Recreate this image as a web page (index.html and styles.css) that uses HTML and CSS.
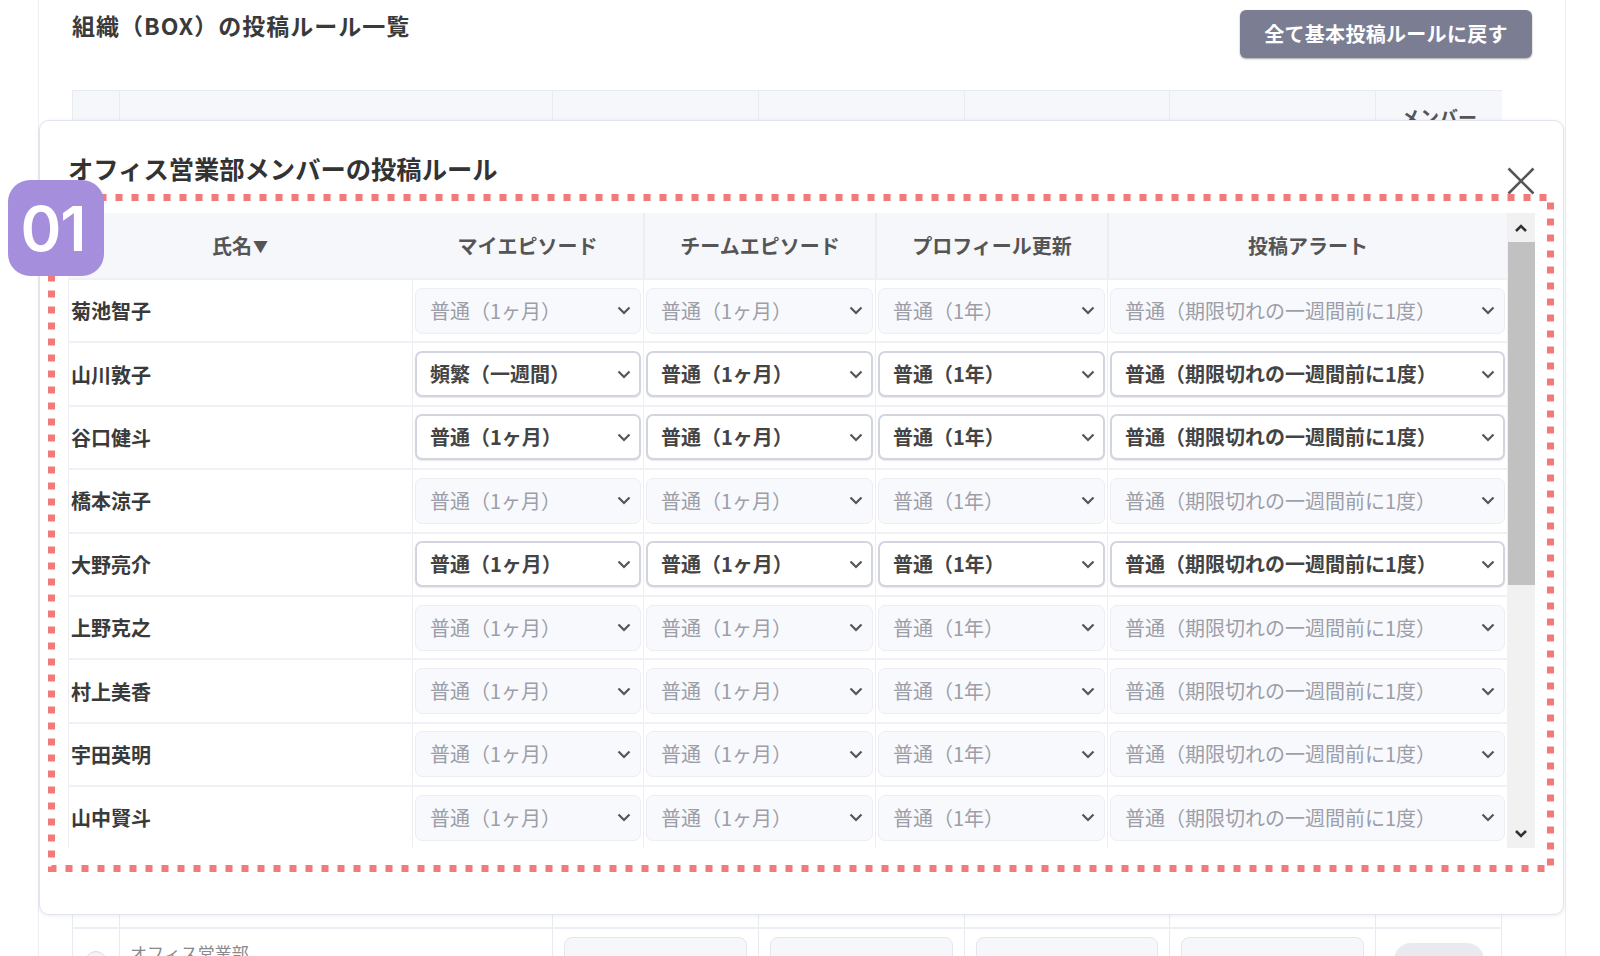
FILE: index.html
```html
<!DOCTYPE html>
<html lang="ja">
<head>
<meta charset="utf-8">
<title>投稿ルール</title>
<link rel="stylesheet" href="styles.css">
</head>
<body>
<div class="page">
  <div class="bg-card">
    <div class="bg-head">
      <h1 class="bg-title">組織（BOX）の投稿ルール一覧</h1>
      <button class="reset-btn">全て基本投稿ルールに戻す</button>
    </div>
    <div class="bg-table">
      <div class="bg-row bg-hrow">
        <div class="bc"></div><div class="bc"></div><div class="bc"></div><div class="bc"></div><div class="bc"></div><div class="bc"></div>
        <div class="bc bh">メンバー<br>数</div>
      </div>
      <div class="bg-row"><div class="bc"><span class="chk"></span></div><div class="bc bn">本社</div><div class="bc"><span class="bbox"></span></div><div class="bc"><span class="bbox"></span></div><div class="bc"><span class="bbox"></span></div><div class="bc"><span class="bbox"></span></div><div class="bc bl"><span class="pill"></span></div></div>
      <div class="bg-row"><div class="bc"><span class="chk"></span></div><div class="bc bn">管理部</div><div class="bc"><span class="bbox"></span></div><div class="bc"><span class="bbox"></span></div><div class="bc"><span class="bbox"></span></div><div class="bc"><span class="bbox"></span></div><div class="bc bl"><span class="pill"></span></div></div>
      <div class="bg-row"><div class="bc"><span class="chk"></span></div><div class="bc bn">人事部</div><div class="bc"><span class="bbox"></span></div><div class="bc"><span class="bbox"></span></div><div class="bc"><span class="bbox"></span></div><div class="bc"><span class="bbox"></span></div><div class="bc bl"><span class="pill"></span></div></div>
      <div class="bg-row"><div class="bc"><span class="chk"></span></div><div class="bc bn">経理部</div><div class="bc"><span class="bbox"></span></div><div class="bc"><span class="bbox"></span></div><div class="bc"><span class="bbox"></span></div><div class="bc"><span class="bbox"></span></div><div class="bc bl"><span class="pill"></span></div></div>
      <div class="bg-row"><div class="bc"><span class="chk"></span></div><div class="bc bn">総務部</div><div class="bc"><span class="bbox"></span></div><div class="bc"><span class="bbox"></span></div><div class="bc"><span class="bbox"></span></div><div class="bc"><span class="bbox"></span></div><div class="bc bl"><span class="pill"></span></div></div>
      <div class="bg-row"><div class="bc"><span class="chk"></span></div><div class="bc bn">開発部</div><div class="bc"><span class="bbox"></span></div><div class="bc"><span class="bbox"></span></div><div class="bc"><span class="bbox"></span></div><div class="bc"><span class="bbox"></span></div><div class="bc bl"><span class="pill"></span></div></div>
      <div class="bg-row"><div class="bc"><span class="chk"></span></div><div class="bc bn">企画部</div><div class="bc"><span class="bbox"></span></div><div class="bc"><span class="bbox"></span></div><div class="bc"><span class="bbox"></span></div><div class="bc"><span class="bbox"></span></div><div class="bc bl"><span class="pill"></span></div></div>
      <div class="bg-row"><div class="bc"><span class="chk"></span></div><div class="bc bn">広報部</div><div class="bc"><span class="bbox"></span></div><div class="bc"><span class="bbox"></span></div><div class="bc"><span class="bbox"></span></div><div class="bc"><span class="bbox"></span></div><div class="bc bl"><span class="pill"></span></div></div>
      <div class="bg-row"><div class="bc"><span class="chk"></span></div><div class="bc bn">営業部</div><div class="bc"><span class="bbox"></span></div><div class="bc"><span class="bbox"></span></div><div class="bc"><span class="bbox"></span></div><div class="bc"><span class="bbox"></span></div><div class="bc bl"><span class="pill"></span></div></div>
      <div class="bg-row"><div class="bc"><span class="chk"></span></div><div class="bc bn">法人営業部</div><div class="bc"><span class="bbox"></span></div><div class="bc"><span class="bbox"></span></div><div class="bc"><span class="bbox"></span></div><div class="bc"><span class="bbox"></span></div><div class="bc bl"><span class="pill"></span></div></div>
      <div class="bg-row"><div class="bc"><span class="chk"></span></div><div class="bc bn">店舗営業部</div><div class="bc"><span class="bbox"></span></div><div class="bc"><span class="bbox"></span></div><div class="bc"><span class="bbox"></span></div><div class="bc"><span class="bbox"></span></div><div class="bc bl"><span class="pill"></span></div></div>
      <div class="bg-row"><div class="bc"><span class="chk"></span></div><div class="bc bn">海外営業部</div><div class="bc"><span class="bbox"></span></div><div class="bc"><span class="bbox"></span></div><div class="bc"><span class="bbox"></span></div><div class="bc"><span class="bbox"></span></div><div class="bc bl"><span class="pill"></span></div></div>
      <div class="bg-row"><div class="bc"><span class="chk"></span></div><div class="bc bn">オフィス営業部</div><div class="bc"><span class="bbox"></span></div><div class="bc"><span class="bbox"></span></div><div class="bc"><span class="bbox"></span></div><div class="bc"><span class="bbox"></span></div><div class="bc bl"><span class="pill"></span></div></div>
    </div>
  </div>

  <div class="modal">
    <div class="m-head">
      <h2 class="m-title">オフィス営業部メンバーの投稿ルール</h2>
      <svg class="m-close" width="28" height="28" viewBox="0 0 28 28"><path d="M1.5 1.5 L26.5 26.5 M26.5 1.5 L1.5 26.5" stroke="#555" stroke-width="2.6" fill="none"/></svg>
    </div>
    <div class="m-body">
      <div class="tbl">
        <div class="t-row t-head">
          <div class="th">氏名<span class="tri">▼</span></div>
          <div class="th">マイエピソード</div>
          <div class="th sep">チームエピソード</div>
          <div class="th sep">プロフィール更新</div>
          <div class="th sep">投稿アラート</div>
        </div>

        <div class="t-row">
          <div class="td nm">菊池智子</div>
          <div class="td"><div class="sel"><span>普通（1ヶ月）</span><svg width="14" height="9" viewBox="0 0 14 9"><path d="M1.5 1.5 L7 7 L12.5 1.5" /></svg></div></div>
          <div class="td"><div class="sel"><span>普通（1ヶ月）</span><svg width="14" height="9" viewBox="0 0 14 9"><path d="M1.5 1.5 L7 7 L12.5 1.5" /></svg></div></div>
          <div class="td"><div class="sel"><span>普通（1年）</span><svg width="14" height="9" viewBox="0 0 14 9"><path d="M1.5 1.5 L7 7 L12.5 1.5" /></svg></div></div>
          <div class="td"><div class="sel"><span>普通（期限切れの一週間前に1度）</span><svg width="14" height="9" viewBox="0 0 14 9"><path d="M1.5 1.5 L7 7 L12.5 1.5" /></svg></div></div>
        </div>

        <div class="t-row">
          <div class="td nm">山川敦子</div>
          <div class="td"><div class="sel on"><span>頻繁（一週間）</span><svg width="14" height="9" viewBox="0 0 14 9"><path d="M1.5 1.5 L7 7 L12.5 1.5" /></svg></div></div>
          <div class="td"><div class="sel on"><span>普通（1ヶ月）</span><svg width="14" height="9" viewBox="0 0 14 9"><path d="M1.5 1.5 L7 7 L12.5 1.5" /></svg></div></div>
          <div class="td"><div class="sel on"><span>普通（1年）</span><svg width="14" height="9" viewBox="0 0 14 9"><path d="M1.5 1.5 L7 7 L12.5 1.5" /></svg></div></div>
          <div class="td"><div class="sel on"><span>普通（期限切れの一週間前に1度）</span><svg width="14" height="9" viewBox="0 0 14 9"><path d="M1.5 1.5 L7 7 L12.5 1.5" /></svg></div></div>
        </div>

        <div class="t-row">
          <div class="td nm">谷口健斗</div>
          <div class="td"><div class="sel on"><span>普通（1ヶ月）</span><svg width="14" height="9" viewBox="0 0 14 9"><path d="M1.5 1.5 L7 7 L12.5 1.5" /></svg></div></div>
          <div class="td"><div class="sel on"><span>普通（1ヶ月）</span><svg width="14" height="9" viewBox="0 0 14 9"><path d="M1.5 1.5 L7 7 L12.5 1.5" /></svg></div></div>
          <div class="td"><div class="sel on"><span>普通（1年）</span><svg width="14" height="9" viewBox="0 0 14 9"><path d="M1.5 1.5 L7 7 L12.5 1.5" /></svg></div></div>
          <div class="td"><div class="sel on"><span>普通（期限切れの一週間前に1度）</span><svg width="14" height="9" viewBox="0 0 14 9"><path d="M1.5 1.5 L7 7 L12.5 1.5" /></svg></div></div>
        </div>

        <div class="t-row">
          <div class="td nm">橋本涼子</div>
          <div class="td"><div class="sel"><span>普通（1ヶ月）</span><svg width="14" height="9" viewBox="0 0 14 9"><path d="M1.5 1.5 L7 7 L12.5 1.5" /></svg></div></div>
          <div class="td"><div class="sel"><span>普通（1ヶ月）</span><svg width="14" height="9" viewBox="0 0 14 9"><path d="M1.5 1.5 L7 7 L12.5 1.5" /></svg></div></div>
          <div class="td"><div class="sel"><span>普通（1年）</span><svg width="14" height="9" viewBox="0 0 14 9"><path d="M1.5 1.5 L7 7 L12.5 1.5" /></svg></div></div>
          <div class="td"><div class="sel"><span>普通（期限切れの一週間前に1度）</span><svg width="14" height="9" viewBox="0 0 14 9"><path d="M1.5 1.5 L7 7 L12.5 1.5" /></svg></div></div>
        </div>

        <div class="t-row">
          <div class="td nm">大野亮介</div>
          <div class="td"><div class="sel on"><span>普通（1ヶ月）</span><svg width="14" height="9" viewBox="0 0 14 9"><path d="M1.5 1.5 L7 7 L12.5 1.5" /></svg></div></div>
          <div class="td"><div class="sel on"><span>普通（1ヶ月）</span><svg width="14" height="9" viewBox="0 0 14 9"><path d="M1.5 1.5 L7 7 L12.5 1.5" /></svg></div></div>
          <div class="td"><div class="sel on"><span>普通（1年）</span><svg width="14" height="9" viewBox="0 0 14 9"><path d="M1.5 1.5 L7 7 L12.5 1.5" /></svg></div></div>
          <div class="td"><div class="sel on"><span>普通（期限切れの一週間前に1度）</span><svg width="14" height="9" viewBox="0 0 14 9"><path d="M1.5 1.5 L7 7 L12.5 1.5" /></svg></div></div>
        </div>

        <div class="t-row">
          <div class="td nm">上野克之</div>
          <div class="td"><div class="sel"><span>普通（1ヶ月）</span><svg width="14" height="9" viewBox="0 0 14 9"><path d="M1.5 1.5 L7 7 L12.5 1.5" /></svg></div></div>
          <div class="td"><div class="sel"><span>普通（1ヶ月）</span><svg width="14" height="9" viewBox="0 0 14 9"><path d="M1.5 1.5 L7 7 L12.5 1.5" /></svg></div></div>
          <div class="td"><div class="sel"><span>普通（1年）</span><svg width="14" height="9" viewBox="0 0 14 9"><path d="M1.5 1.5 L7 7 L12.5 1.5" /></svg></div></div>
          <div class="td"><div class="sel"><span>普通（期限切れの一週間前に1度）</span><svg width="14" height="9" viewBox="0 0 14 9"><path d="M1.5 1.5 L7 7 L12.5 1.5" /></svg></div></div>
        </div>

        <div class="t-row">
          <div class="td nm">村上美香</div>
          <div class="td"><div class="sel"><span>普通（1ヶ月）</span><svg width="14" height="9" viewBox="0 0 14 9"><path d="M1.5 1.5 L7 7 L12.5 1.5" /></svg></div></div>
          <div class="td"><div class="sel"><span>普通（1ヶ月）</span><svg width="14" height="9" viewBox="0 0 14 9"><path d="M1.5 1.5 L7 7 L12.5 1.5" /></svg></div></div>
          <div class="td"><div class="sel"><span>普通（1年）</span><svg width="14" height="9" viewBox="0 0 14 9"><path d="M1.5 1.5 L7 7 L12.5 1.5" /></svg></div></div>
          <div class="td"><div class="sel"><span>普通（期限切れの一週間前に1度）</span><svg width="14" height="9" viewBox="0 0 14 9"><path d="M1.5 1.5 L7 7 L12.5 1.5" /></svg></div></div>
        </div>

        <div class="t-row">
          <div class="td nm">宇田英明</div>
          <div class="td"><div class="sel"><span>普通（1ヶ月）</span><svg width="14" height="9" viewBox="0 0 14 9"><path d="M1.5 1.5 L7 7 L12.5 1.5" /></svg></div></div>
          <div class="td"><div class="sel"><span>普通（1ヶ月）</span><svg width="14" height="9" viewBox="0 0 14 9"><path d="M1.5 1.5 L7 7 L12.5 1.5" /></svg></div></div>
          <div class="td"><div class="sel"><span>普通（1年）</span><svg width="14" height="9" viewBox="0 0 14 9"><path d="M1.5 1.5 L7 7 L12.5 1.5" /></svg></div></div>
          <div class="td"><div class="sel"><span>普通（期限切れの一週間前に1度）</span><svg width="14" height="9" viewBox="0 0 14 9"><path d="M1.5 1.5 L7 7 L12.5 1.5" /></svg></div></div>
        </div>

        <div class="t-row">
          <div class="td nm">山中賢斗</div>
          <div class="td"><div class="sel"><span>普通（1ヶ月）</span><svg width="14" height="9" viewBox="0 0 14 9"><path d="M1.5 1.5 L7 7 L12.5 1.5" /></svg></div></div>
          <div class="td"><div class="sel"><span>普通（1ヶ月）</span><svg width="14" height="9" viewBox="0 0 14 9"><path d="M1.5 1.5 L7 7 L12.5 1.5" /></svg></div></div>
          <div class="td"><div class="sel"><span>普通（1年）</span><svg width="14" height="9" viewBox="0 0 14 9"><path d="M1.5 1.5 L7 7 L12.5 1.5" /></svg></div></div>
          <div class="td"><div class="sel"><span>普通（期限切れの一週間前に1度）</span><svg width="14" height="9" viewBox="0 0 14 9"><path d="M1.5 1.5 L7 7 L12.5 1.5" /></svg></div></div>
        </div>
      </div>
      <div class="sbar">
        <div class="sb-btn"><svg width="14" height="10" viewBox="0 0 14 10"><path d="M2 8 L7 3 L12 8"/></svg></div>
        <div class="sb-thumb"></div>
        <div class="sb-track"></div>
        <div class="sb-btn"><svg width="14" height="10" viewBox="0 0 14 10"><path d="M2 2 L7 7 L12 2"/></svg></div>
      </div>
    </div>
  </div>

  <div class="annot">
    <svg width="1506" height="678" viewBox="0 0 1506 678"><rect x="3.5" y="3.5" width="1499" height="671" fill="none" stroke="#f47a7a" stroke-width="7" stroke-dasharray="7 9"/></svg>
  </div>
  <div class="badge">01</div>
</div>
</body>
</html>
```

FILE: styles.css
```css
* { box-sizing: border-box; margin: 0; padding: 0; }
html, body { width: 1600px; height: 956px; overflow: hidden; background: #fff; }
body { font-family: "Noto Sans CJK JP", "Noto Sans", sans-serif; color: #333; }

.page { position: relative; width: 1600px; height: 956px; overflow: hidden; }

/* background page */
.bg-card {
  margin-left: 38px;
  width: 1528px;
  height: 956px;
  border-left: 1px solid #eceef4;
  border-right: 1px solid #eceef4;
  padding: 10px 33px 0 33px;
}
.bg-head { display: flex; justify-content: space-between; align-items: flex-start; height: 58px; margin-bottom: 22px; }
.bg-title { font-size: 23px; font-weight: 700; line-height: 30px; letter-spacing: 1px; color: #3a3a3a; }
.reset-btn {
  width: 292px; height: 48px;
  border: none; border-radius: 6px;
  background: #7b7e93; color: #fff;
  font-family: "Noto Sans CJK JP", sans-serif; font-weight: 700; font-size: 20px; line-height: 1;
  letter-spacing: 0.3px;
  box-shadow: 0 1px 2px rgba(0,0,0,.35);
}
.bg-table { width: 1430px; }
.bg-row {
  display: grid;
  grid-template-columns: 47px 433px 206px 206px 205px 206px 127px;
  height: 64px;
  border-top: 2px solid #eceef4;
}
.bg-hrow { height: 69px; background: #f6f7fb; border-top: 1px solid #e9ebf2; }
.bc { border-left: 1px solid #e9ebf2; padding-top: 8px; }
.bc.bl { border-right: 1px solid #e9ebf2; }
.bh { text-align: center; padding-top: 14px; font-size: 19px; line-height: 24px; font-weight: 700; color: #555; }
.bn { padding: 12px 0 0 10px; font-size: 17px; line-height: 24px; color: #8a8a8a; }
.chk { display: block; width: 22px; height: 22px; margin: 14px 0 0 12px; border: 1.5px solid #d8dbe4; border-radius: 50%; background: #f3f4f8; }
.bbox { display: block; height: 42px; margin: 0 11px; background: #f6f7fb; border: 1px solid #e3e6ee; border-radius: 8px; }
.pill { display: block; width: 90px; height: 34px; margin: 6px auto 0; background: #e8eaf0; border-radius: 17px; }

/* modal */
.modal {
  position: absolute; left: 39px; top: 120px;
  width: 1525px; height: 795px;
  background: #fff;
  border: 1px solid #e1e4ed;
  border-radius: 10px;
  box-shadow: 0 1px 4px rgba(30,40,80,.08);
  padding: 30px 28px 0 28px;
}
.m-head { display: flex; justify-content: space-between; align-items: flex-start; height: 62px; }
.m-title { font-size: 25.3px; line-height: 35px; font-weight: 700; color: #333; }
.m-close { display: block; margin-top: 16px; }

.m-body { display: flex; height: 635px; }
.tbl { width: 1439px; height: 635px; overflow: hidden; }
.t-row {
  display: grid;
  grid-template-columns: 344px 231px 232px 232px 400px;
  height: 63.4px;
  border-top: 2px solid #f0f1f6;
}
.t-head { height: 65px; background: #f6f7fb; border-top: none; }
.th { display: flex; align-items: center; justify-content: center; font-size: 20px; font-weight: 700; color: #555; }
.th .tri { font-size: 15px; margin-left: 1px; }
.th.sep { border-left: 2px solid #eceef4; }
.td { display: flex; align-items: center; border-left: 1px solid #eceef3; padding: 0 2px 0 2px; }
.nm { padding-left: 2px; font-size: 20px; font-weight: 700; color: #3a3a3a; }

.sel {
  flex: 1;
  height: 46px;
  display: flex; align-items: center; justify-content: space-between;
  padding: 0 9px 0 14px;
  background: #f8f9fd;
  border: 1px solid #eceef4;
  border-radius: 7px;
  font-size: 20px; line-height: 1;
  color: #9c9ea8;
}
.sel svg { display: block; fill: none; stroke: #555; stroke-width: 2.2; }
.sel.on {
  background: #fff;
  border: 2px solid #d2d5df;
  padding-left: 13px; padding-right: 8px;
  color: #444; font-weight: 700;
  box-shadow: 0 1px 1px rgba(60,70,100,.12);
}

.sbar { width: 28px; background: #f1f1f1; display: flex; flex-direction: column; }
.sb-btn { height: 29px; display: flex; align-items: center; justify-content: center; }
.sb-btn svg { display: block; fill: none; stroke: #333; stroke-width: 2.6; }
.sb-thumb { height: 343px; margin-left: 1px; background: #c1c1c1; }
.sb-track { flex: 1; }

/* annotation */
.annot { position: absolute; left: 48px; top: 194px; width: 1506px; height: 678px; pointer-events: none; }
.annot svg { display: block; }
.badge {
  position: absolute; left: 8px; top: 180px;
  width: 96px; height: 96px;
  border-radius: 22px;
  background: #a58fdc;
  color: #fff;
  display: flex; align-items: center; justify-content: center;
  padding-right: 6px;
  font-family: Inter, "Noto Sans", sans-serif; font-weight: 600; font-size: 62px; letter-spacing: -1px;
}
```
